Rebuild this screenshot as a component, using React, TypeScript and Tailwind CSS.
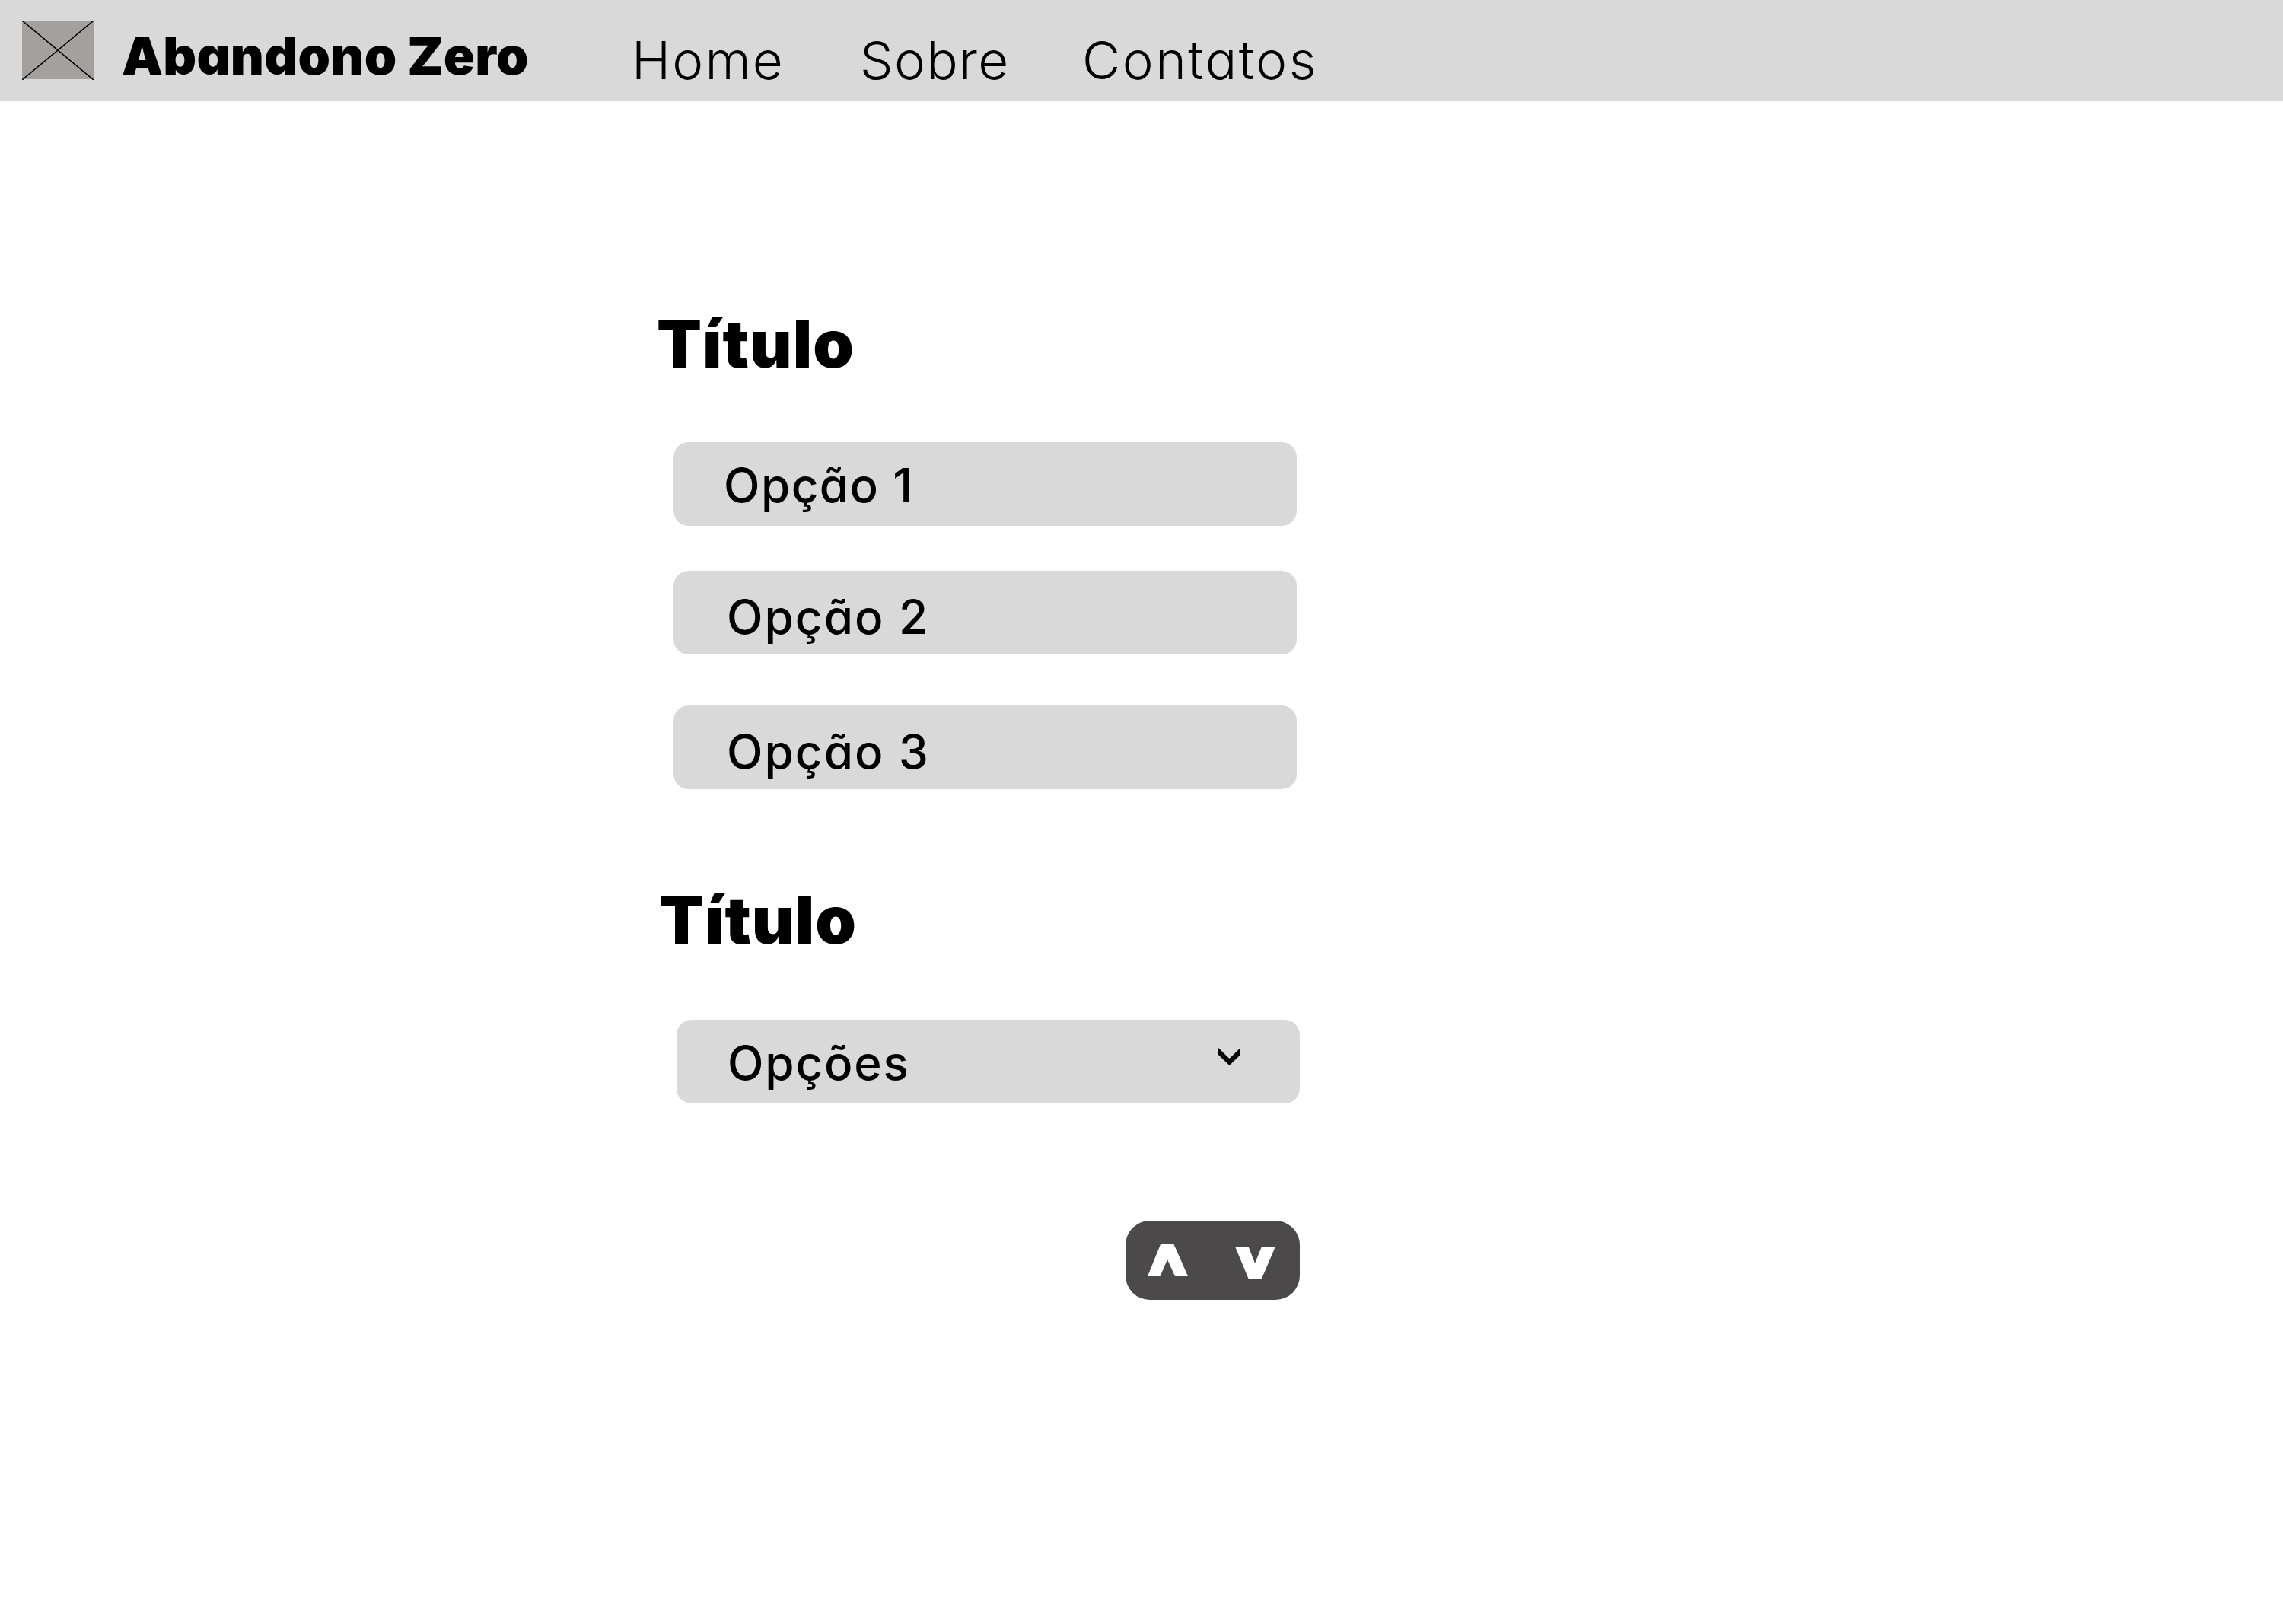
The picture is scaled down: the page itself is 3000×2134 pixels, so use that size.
const font = "font-['Inter',sans-serif] [font-feature-settings:'cv11']";

function Option({ label, className, textClass }: { label: string; className: string; textClass: string }) {
  return (
    <div className={`flex h-[110px] w-[819px] items-center rounded-[20px] bg-[#d9d9d9] ${className}`}>
      <span className={`text-[62px] leading-[110px] font-medium text-black ${textClass}`}>{label}</span>
    </div>
  );
}

export default function App() {
  return (
    <div className={`h-[2134px] w-[3000px] overflow-hidden bg-white text-black ${font}`}>
      <header className="flex h-[133px] items-start bg-[#d9d9d9]">
        <svg className="mt-[27px] ml-[29px] shrink-0" width="94" height="78" viewBox="0 0 94 78">
          <rect x="0" y="1" width="94" height="76" fill="#a3a09e" />
          <path d="M0 0 L94 78 M94 0 L0 78" stroke="#000" strokeWidth="1.5" />
        </svg>
        <span className="mt-[31px] ml-[37px] w-[580px] text-[68px] leading-[84px] font-black tracking-[0.3px] whitespace-nowrap">Abandono Zero</span>
        <nav className="mt-[37px] ml-[90px] flex text-[69px] leading-[84px] font-[350]">
          <a className="w-[300px] tracking-[2.2px]">Home</a>
          <a className="w-[292px] tracking-[1.4px]">Sobre</a>
          <a className="tracking-[2.5px]">Contatos</a>
        </nav>
      </header>

      <main className="pl-[863px]">
        <h2 className="mt-[269px] text-[86px] leading-[100px] font-black tracking-[1px]">Título</h2>
        <Option label="Opção 1" className="mt-[79px] ml-[22px]" textClass="ml-[66px] pt-[4px] tracking-[1.4px]" />
        <Option label="Opção 2" className="mt-[59px] ml-[22px]" textClass="ml-[70px] pt-[12px] tracking-[2px]" />
        <Option label="Opção 3" className="mt-[67px] ml-[22px]" textClass="ml-[70px] pt-[12px] tracking-[2px]" />
        <h2 className="mt-[122px] ml-[3px] text-[86px] leading-[100px] font-black tracking-[1px]">Título</h2>
        <div className="mt-[81px] ml-[26px] flex h-[110px] w-[819px] items-center justify-between rounded-[20px] bg-[#d9d9d9]">
          <span className="ml-[67px] pt-[4px] text-[62px] leading-[110px] font-medium tracking-[1.8px]">Opções</span>
          <svg className="mr-[78px] mb-[13px]" width="29" height="23" viewBox="0 0 29 23">
            <path d="M0 0 L14.5 14 L29 0 V9 L14.5 23 L0 9 Z" fill="#000" />
          </svg>
        </div>
        <div className="mt-[154px] ml-[616px] flex h-[104px] w-[229px] items-center justify-between rounded-[32px] bg-[#4b4949] pr-[32px] pl-[29px]">
          <svg width="53" height="42" viewBox="0 0 53 42">
            <path d="M17 0 H34.5 L53 42 H36 L26 20 L16.5 42 H0 Z" fill="#fff" />
          </svg>
          <svg className="mt-[6px]" width="53" height="42" viewBox="0 0 53 42">
            <path d="M0 0 H17.5 L26 22 L35 0 H53 L35 42 H17.5 Z" fill="#fff" />
          </svg>
        </div>
      </main>
    </div>
  );
}
